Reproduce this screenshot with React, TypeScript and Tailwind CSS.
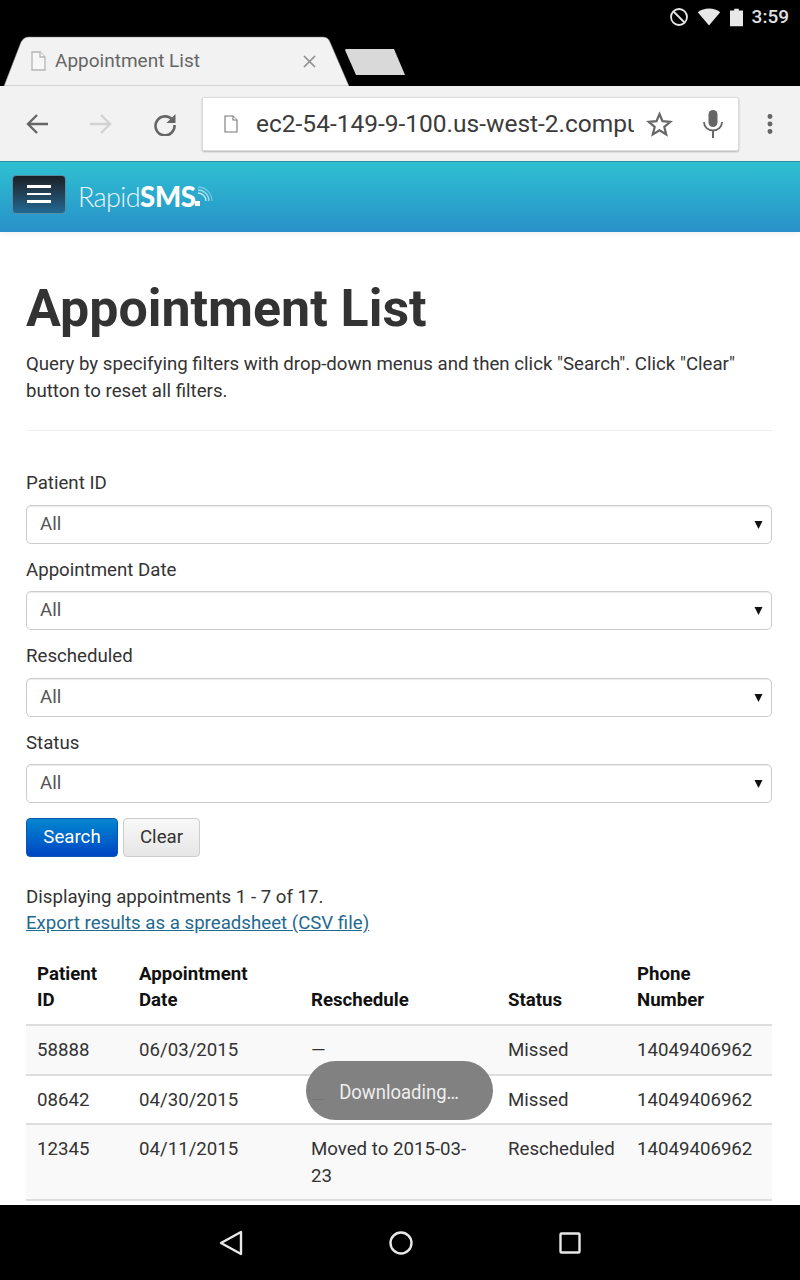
import { MoreVertical } from 'lucide-react';

const filters = ['Patient ID', 'Appointment Date', 'Rescheduled', 'Status'];

const rows = [
  { id: '58888', date: '06/03/2015', reschedule: '—', status: 'Missed', phone: '14049406962' },
  { id: '08642', date: '04/30/2015', reschedule: '—', status: 'Missed', phone: '14049406962' },
  { id: '12345', date: '04/11/2015', reschedule: 'Moved to 2015-03-23', status: 'Rescheduled', phone: '14049406962' },
];

function StatusBar() {
  return (
    <div className="flex h-[34px] items-center justify-end pr-[11px] text-[#e0e0e0]">
      <svg width="20" height="20" viewBox="0 0 20 20" fill="none" stroke="#e8e8e8" strokeWidth="1.8">
        <circle cx="10" cy="10" r="8" />
        <path d="M4.5 4.5l11 11" />
      </svg>
      <svg className="ml-[8px]" width="24" height="18" viewBox="0 0 24 18" fill="#e8e8e8">
        <path d="M0.8 4.2C4 1.6 7.8 0.4 12 0.4s8 1.2 11.2 3.8L12 17.6z" />
      </svg>
      <svg className="ml-[9px]" width="13" height="19" viewBox="0 0 14 19" fill="#e8e8e8">
        <path d="M4.5 0h5v2H14v17H0V2h4.500z" />
      </svg>
      <span className="ml-[9px] font-['Roboto',sans-serif] text-[19px] font-medium">3:59</span>
    </div>
  );
}

function TabStrip() {
  return (
    <div className="relative h-[52px]">
      <svg className="absolute top-0 left-0" width="420" height="52" viewBox="0 0 420 52">
        <path d="M4 52 L21 8 Q24 3 28 3 L323 3 Q328 3 330 8 L349 52 Z" fill="#f2f2f2" stroke="#777" strokeWidth="0.5" />
        <path d="M345 16 Q345 15 347 15 L394 15 L405 41 L356 41 Z" fill="#d9d9d9" />
      </svg>
      <div className="relative flex h-[52px] w-[330px] items-center pt-[2px] pl-[31px] font-['Roboto',sans-serif]">
        <svg width="15" height="20" viewBox="0 0 15 20" fill="#f7f7f7" stroke="#b5b5b5" strokeWidth="1.300">
          <path d="M1 1h8l5 5v13H1z" />
          <path d="M9 1v5h5" />
        </svg>
        <span className="ml-[9px] text-[19px] text-[#666]">Appointment List</span>
        <svg className="absolute top-[21px] left-[303px]" width="13" height="13" viewBox="0 0 13 13" stroke="#8f8f8f" strokeWidth="1.700">
          <path d="M1 1l11 11M12 1L1 12" />
        </svg>
      </div>
    </div>
  );
}

function Toolbar() {
  return (
    <div className="flex h-[75px] items-center bg-[#f2f2f2] pl-[26px]">
      <svg width="22" height="22" viewBox="0 0 22 22" fill="none" stroke="#666" strokeWidth="2.400">
        <path d="M22 11H2M11 2l-9 9 9 9" />
      </svg>
      <svg className="ml-[42px]" width="22" height="22" viewBox="0 0 22 22" fill="none" stroke="#d2d2d2" strokeWidth="2.400">
        <path d="M0 11h20M11 2l9 9-9 9" />
      </svg>
      <svg className="ml-[41px]" width="24" height="24" viewBox="0 0 24 24" fill="none" stroke="#666" strokeWidth="2.600">
        <path d="M19.500 8A9.500 9.500 0 1 0 21.500 13" />
        <path d="M22.500 2v9h-9z" fill="#666" stroke="none" />
      </svg>
      <div className="ml-[25px] flex h-[54px] w-[537px] items-center rounded-[2px] border border-[#dcdcdc] bg-white pl-[21px] shadow-[0_1px_2px_rgba(0,0,0,0.25)]">
        <svg className="shrink-0" width="14" height="18" viewBox="0 0 14 18" fill="#fff" stroke="#777" strokeWidth="1.100">
          <path d="M1 1h8l4 4v12H1z" />
          <path d="M9 1v4h4" />
        </svg>
        <span className="ml-[18px] w-[378px] overflow-hidden pt-[2px] font-['Roboto',sans-serif] text-[24.500px] whitespace-nowrap text-[#3c3c3c]">
          ec2-54-149-9-100.us-west-2.compute.amazonaws.com
        </span>
        <svg className="ml-[12px] shrink-0" width="27" height="26" viewBox="0 0 27 26" fill="none" stroke="#666" strokeWidth="2.200">
          <path d="M13.500 3l3 7.200 7.800.6-6 5 1.900 7.600-6.700-4.100-6.700 4.100 1.900-7.600-6-5 7.800-.6z" />
        </svg>
        <svg className="ml-[30px] shrink-0" width="20" height="28" viewBox="0 0 20 28" fill="#666">
          <rect x="5.500" y="0" width="9" height="17" rx="4.500" />
          <path d="M1 12c0 5 4 8.500 9 8.500s9-3.500 9-8.500" fill="none" stroke="#666" strokeWidth="1.800" />
          <rect x="9" y="20" width="2" height="8" />
        </svg>
      </div>
      <MoreVertical className="ml-[18px] h-[26px] w-[26px] fill-[#666] text-[#666]" strokeWidth={2.600} />
    </div>
  );
}

function Navbar() {
  return (
    <div className="flex h-[71px] items-center border-t border-[#2a8ea3] bg-gradient-to-b from-[#2fc0d2] to-[#2891c8] pl-[12px] shadow-[0_2px_5px_rgba(0,0,0,0.06)]">
      <div className="mb-[6px] flex h-[39px] w-[54px] flex-col items-center justify-center gap-[5px] rounded-[4px] border border-[#5c8ba0] bg-gradient-to-b from-[#1a2027] to-[#1f6a94]">
        <div className="h-[2.500px] w-[24px] bg-white" />
        <div className="h-[2.500px] w-[24px] bg-white" />
        <div className="h-[2.500px] w-[24px] bg-white" />
      </div>
      <div className="ml-[12px] flex items-baseline font-['Lato',sans-serif] text-[27px] leading-none text-white">
        <span className="font-light tracking-[-0.6px] opacity-90">Rapid</span>
        <span className="text-[27.500px] font-black tracking-[-0.3px]">SMS</span>
      </div>
      <svg className="-ml-[1px]" width="20" height="26" viewBox="0 0 20 26" fill="none" stroke="#fff">
        <rect x="0" y="17" width="5" height="5" fill="#fff" stroke="none" />
        <path d="M3 9a8 8 0 0 1 8 8" strokeOpacity="0.8" strokeWidth="1.300" />
        <path d="M3 6a11 11 0 0 1 11 11" strokeOpacity="0.55" strokeWidth="1.300" />
        <path d="M3 3a14 14 0 0 1 14 14" strokeOpacity="0.35" strokeWidth="1.300" />
      </svg>
    </div>
  );
}

function FilterSelect({ label }: { label: string }) {
  return (
    <div className="mb-[13px]">
      <div className="mb-[7.500px] h-[27px] leading-[27px] text-[#333]">{label}</div>
      <div className="flex h-[39px] items-center justify-between rounded-[5px] border border-[#ccc] bg-white pr-[8px] pl-[13px] text-[#555] shadow-[inset_0_1px_1px_rgba(0,0,0,0.08)]">
        <span>All</span>
        <svg width="9" height="9" viewBox="0 0 9 9" fill="#111">
          <path d="M0.500 1h8L4.500 9z" />
        </svg>
      </div>
    </div>
  );
}

function AppointmentTable() {
  return (
    <table className="mt-[14px] w-[746px] table-fixed border-collapse">
      <colgroup>
        <col className="w-[102px]" />
        <col className="w-[172px]" />
        <col className="w-[197px]" />
        <col className="w-[129px]" />
        <col className="w-[146px]" />
      </colgroup>
      <thead>
        <tr className="border-b-2 border-[#ddd] text-left align-bottom leading-[26px] text-[#111]">
          <th className="px-[11px] pt-[11px] pb-[11px] font-bold">
            Patient
            <br />
            ID
          </th>
          <th className="px-[11px] pt-[11px] pb-[11px] font-bold">
            Appointment
            <br />
            Date
          </th>
          <th className="px-[11px] pt-[11px] pb-[11px] font-bold">Reschedule</th>
          <th className="px-[11px] pt-[11px] pb-[11px] font-bold">Status</th>
          <th className="px-[11px] pt-[11px] pb-[11px] font-bold">
            Phone
            <br />
            Number
          </th>
        </tr>
      </thead>
      <tbody>
        {rows.map((row, i) => (
          <tr key={row.id} className={`border-b-2 border-[#ddd] align-top ${i % 2 === 0 ? 'bg-[#f9f9f9]' : 'bg-white'}`}>
            <td className="px-[11px] pt-[11px] pb-[10px]">{row.id}</td>
            <td className="px-[11px] pt-[11px] pb-[10px]">{row.date}</td>
            <td className="px-[11px] pt-[11px] pb-[10px]">{row.reschedule}</td>
            <td className="px-[11px] pt-[11px] pb-[10px]">{row.status}</td>
            <td className="px-[11px] pt-[11px] pb-[10px]">{row.phone}</td>
          </tr>
        ))}
      </tbody>
    </table>
  );
}

function BottomNav() {
  return (
    <div className="absolute right-0 bottom-0 left-0 flex h-[75px] items-center justify-center gap-[146px] bg-black">
      <svg width="24" height="26" viewBox="0 0 24 26" fill="none" stroke="#e8e8e8" strokeWidth="2.400">
        <path d="M22 2L2 13l20 11z" strokeLinejoin="round" />
      </svg>
      <svg width="24" height="24" viewBox="0 0 24 24" fill="none" stroke="#e8e8e8" strokeWidth="2.400">
        <circle cx="12" cy="12" r="10.500" />
      </svg>
      <svg width="22" height="22" viewBox="0 0 22 22" fill="none" stroke="#e8e8e8" strokeWidth="2.400">
        <rect x="1.500" y="1.500" width="19" height="19" rx="1" />
      </svg>
    </div>
  );
}

export default function App() {
  return (
    <div className="relative h-[1280px] w-[800px] overflow-hidden bg-white font-['Roboto',sans-serif] text-[18.670px] leading-[26.500px] text-[#333]">
      <div className="bg-black">
        <StatusBar />
        <TabStrip />
      </div>
      <Toolbar />
      <Navbar />
      <main className="pr-[28px] pl-[26px]">
        <h1 className="mt-[48px] text-[51.900px] leading-[58px] font-bold text-[#333]">Appointment List</h1>
        <p className="mt-[13px] w-[740px]">
          Query by specifying filters with drop-down menus and then click "Search". Click "Clear" button to reset all filters.
        </p>
        <hr className="mt-[26px] mb-[39px] border-[#eee]" />
        {filters.map((label) => (
          <FilterSelect key={label} label={label} />
        ))}
        <div className="mt-[15px] flex gap-[5px]">
          <button className="h-[39px] w-[92px] rounded-[4px] border border-[#0a56b0] bg-gradient-to-b from-[#0a86cf] to-[#0044c4] text-white">
            Search
          </button>
          <button className="h-[39px] w-[77px] rounded-[4px] border border-[#ccc] bg-gradient-to-b from-[#f8f8f8] to-[#e6e6e6] text-[#333]">
            Clear
          </button>
        </div>
        <p className="mt-[27px] leading-[26px]">Displaying appointments 1 - 7 of 17.</p>
        <a className="block leading-[26px] text-[#1f6a90] underline">Export results as a spreadsheet (CSV file)</a>
        <AppointmentTable />
      </main>
      <div className="absolute top-[1061px] left-[306px] flex h-[59px] w-[187px] items-center justify-center rounded-[30px] bg-[#7a7a7a]/95 pt-[3px] text-[21px] text-[#eee]">
        <span className="scale-x-[0.88]">Downloading…</span>
      </div>
      <BottomNav />
    </div>
  );
}
